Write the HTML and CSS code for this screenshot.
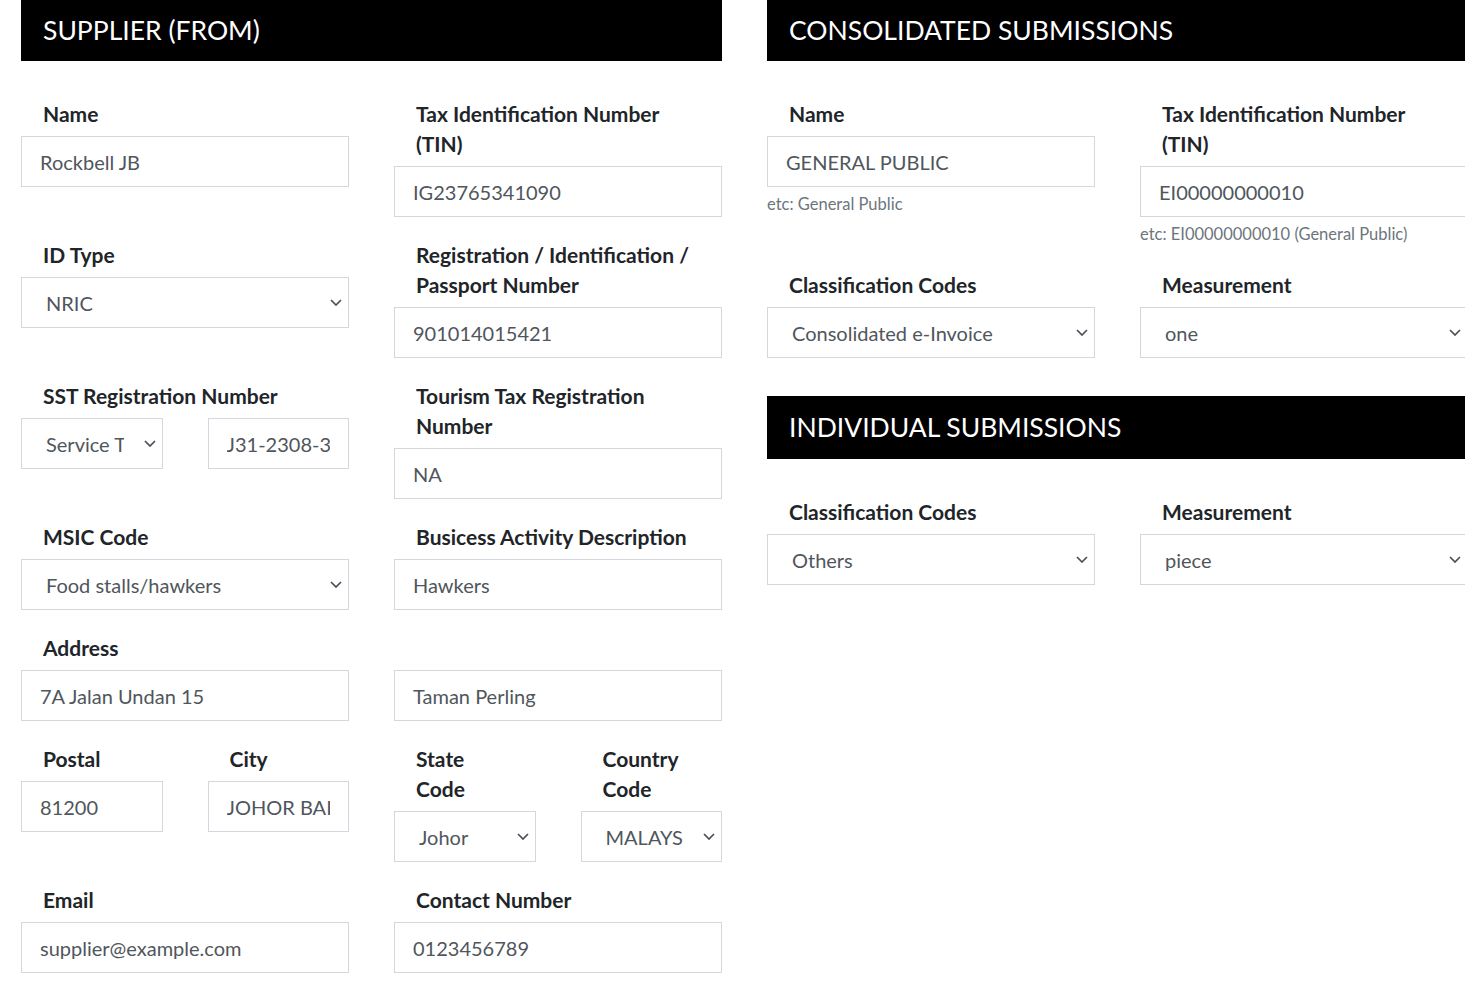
FILE: index.html
```html
<!DOCTYPE html>
<html lang="en">
<head>
<meta charset="utf-8">
<title>Supplier</title>
<link rel="stylesheet" href="styles.css">
</head>
<body>
<div class="page">
  <section class="panel">
    <h2 class="head">SUPPLIER (FROM)</h2>
    <div class="grid">
      <div class="field">
        <label class="lbl">Name</label>
        <input class="ctl" value="Rockbell JB">
      </div>
      <div class="field">
        <label class="lbl">Tax Identification Number (TIN)</label>
        <input class="ctl" value="IG23765341090">
      </div>
      <div class="field">
        <label class="lbl">ID Type</label>
        <div class="sel"><select class="ctl"><option>NRIC</option></select><svg class="chev" viewBox="0 0 12 7"><path d="M1 1l5 5 5-5"/></svg></div>
      </div>
      <div class="field">
        <label class="lbl">Registration / Identification / Passport Number</label>
        <input class="ctl" value="901014015421">
      </div>
      <div class="field">
        <label class="lbl">SST Registration Number</label>
        <div class="pair">
          <div class="sel"><select class="ctl"><option>Service Tax</option></select><svg class="chev" viewBox="0 0 12 7"><path d="M1 1l5 5 5-5"/></svg></div>
          <input class="ctl" value="J31-2308-32000000">
        </div>
      </div>
      <div class="field">
        <label class="lbl">Tourism Tax Registration Number</label>
        <input class="ctl" value="NA">
      </div>
      <div class="field">
        <label class="lbl">MSIC Code</label>
        <div class="sel"><select class="ctl"><option>Food stalls/hawkers</option></select><svg class="chev" viewBox="0 0 12 7"><path d="M1 1l5 5 5-5"/></svg></div>
      </div>
      <div class="field">
        <label class="lbl">Busicess Activity Description</label>
        <input class="ctl" value="Hawkers">
      </div>
      <div class="field span2">
        <label class="lbl">Address</label>
        <div class="cols">
          <input class="ctl" value="7A Jalan Undan 15">
          <input class="ctl" value="Taman Perling">
        </div>
      </div>
      <div class="pair">
        <div class="field">
          <label class="lbl">Postal</label>
          <input class="ctl" value="81200">
        </div>
        <div class="field">
          <label class="lbl">City</label>
          <input class="ctl" value="JOHOR BAHRU">
        </div>
      </div>
      <div class="pair">
        <div class="field">
          <label class="lbl">State Code</label>
          <div class="sel"><select class="ctl"><option>Johor</option></select><svg class="chev" viewBox="0 0 12 7"><path d="M1 1l5 5 5-5"/></svg></div>
        </div>
        <div class="field">
          <label class="lbl">Country Code</label>
          <div class="sel"><select class="ctl"><option>MALAYSIA</option></select><svg class="chev" viewBox="0 0 12 7"><path d="M1 1l5 5 5-5"/></svg></div>
        </div>
      </div>
      <div class="field">
        <label class="lbl">Email</label>
        <input class="ctl" value="supplier@example.com">
      </div>
      <div class="field">
        <label class="lbl">Contact Number</label>
        <input class="ctl" value="0123456789">
      </div>
    </div>
  </section>

  <section class="panel">
    <h2 class="head">CONSOLIDATED SUBMISSIONS</h2>
    <div class="grid">
      <div class="field">
        <label class="lbl">Name</label>
        <input class="ctl" value="GENERAL PUBLIC">
        <p class="hint">etc: General Public</p>
      </div>
      <div class="field">
        <label class="lbl">Tax Identification Number (TIN)</label>
        <input class="ctl" value="EI00000000010">
        <p class="hint">etc: EI00000000010 (General Public)</p>
      </div>
      <div class="field">
        <label class="lbl">Classification Codes</label>
        <div class="sel"><select class="ctl"><option>Consolidated e-Invoice</option></select><svg class="chev" viewBox="0 0 12 7"><path d="M1 1l5 5 5-5"/></svg></div>
      </div>
      <div class="field">
        <label class="lbl">Measurement</label>
        <div class="sel"><select class="ctl"><option>one</option></select><svg class="chev" viewBox="0 0 12 7"><path d="M1 1l5 5 5-5"/></svg></div>
      </div>
    </div>

    <h2 class="head head2">INDIVIDUAL SUBMISSIONS</h2>
    <div class="grid">
      <div class="field">
        <label class="lbl">Classification Codes</label>
        <div class="sel"><select class="ctl"><option>Others</option></select><svg class="chev" viewBox="0 0 12 7"><path d="M1 1l5 5 5-5"/></svg></div>
      </div>
      <div class="field">
        <label class="lbl">Measurement</label>
        <div class="sel"><select class="ctl"><option>piece</option></select><svg class="chev" viewBox="0 0 12 7"><path d="M1 1l5 5 5-5"/></svg></div>
      </div>
    </div>
  </section>
</div>
</body>
</html>
```
FILE: styles.css
```css
html { overflow: hidden; }
body {
  margin: 0;
  background: #fff;
  font-family: "Lato", "Liberation Sans", sans-serif;
  color: #212529;
}
.page {
  display: flex;
  gap: 45px;
  padding-left: 21px;
  width: 1500px;
}
.panel {
  width: 701px;
  flex: none;
}
.head {
  margin: 0;
  background: #000;
  color: #fff;
  font-size: 26.5px;
  font-weight: 400;
  height: 61px;
  line-height: 61px;
  padding-left: 22px;
}
.head2 {
  margin-top: 38px;
  height: 63px;
  line-height: 63px;
}
.grid {
  margin-top: 38px;
  display: grid;
  grid-template-columns: 328px 328px;
  column-gap: 45px;
  row-gap: 23px;
  align-items: start;
}
.span2 { grid-column: 1 / span 2; }
.cols {
  display: grid;
  grid-template-columns: 328px 328px;
  column-gap: 45px;
}
.pair {
  display: grid;
  grid-template-columns: 1fr 1fr;
  column-gap: 45px;
  align-items: start;
}
.field {
  display: flex;
  flex-direction: column;
  min-width: 0;
}
.lbl {
  display: block;
  padding: 0 22px;
  font-size: 21px;
  font-weight: 700;
  line-height: 30px;
  margin-bottom: 7px;
  color: #212529;
}
.ctl {
  display: block;
  box-sizing: border-box;
  width: 100%;
  height: 51px;
  margin: 0;
  border: 1px solid #d3d7de;
  border-radius: 0;
  background: #fff;
  padding: 0 18px 0 18px;
  font-family: inherit;
  font-size: 20px;
  color: #50565c;
  outline: none;
}
.sel { position: relative; }
select.ctl {
  -webkit-appearance: none;
  appearance: none;
  padding: 0 38px 0 24px;
}
.chev {
  position: absolute;
  right: 7px;
  top: 22px;
  width: 12px;
  height: 7px;
  fill: none;
  stroke: #495057;
  stroke-width: 1.7;
  pointer-events: none;
}
.hint {
  margin: 4px 0 0;
  font-size: 16.5px;
  line-height: 26px;
  color: #6c757d;
}
```
